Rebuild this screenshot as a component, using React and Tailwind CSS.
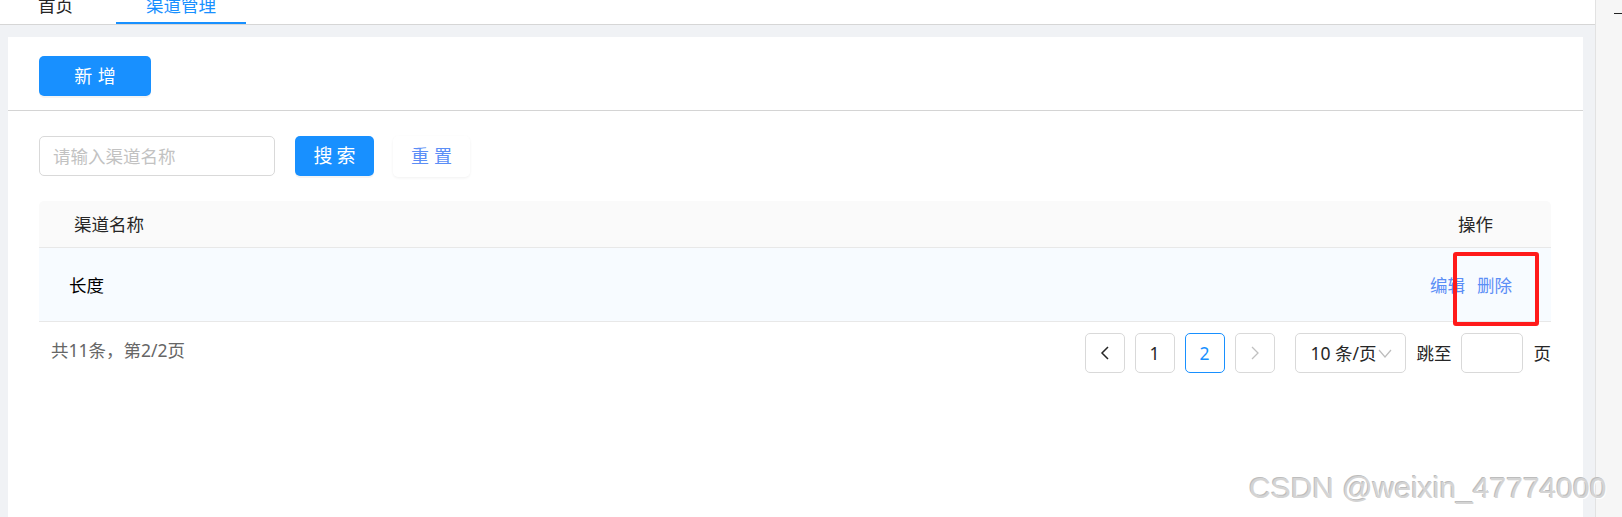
export default function App() {
  return (
    <div className="relative flex h-[517px] w-full overflow-hidden bg-[#f0f2f5] text-[17.5px] leading-[24px] text-[#262626] font-['Noto_Sans','Noto_Sans_CJK_SC',sans-serif]">
      {/* Main column */}
      <div className="flex w-[1595px] shrink-0 flex-col">
        {/* Tabs */}
        <div className="flex h-[25px] shrink-0 border-b border-[#d6d6d6] bg-white">
          <div className="ml-[38px] flex w-[78px] flex-col">
            <span className="-mt-[3px] block leading-[17.5px]">首页</span>
          </div>
          <div className="flex w-[130px] flex-col text-center text-[#1890ff]">
            <span className="-mt-[3px] block leading-[17.5px]">渠道管理</span>
            <div className="mt-auto h-[2px] bg-[#1890ff]" />
          </div>
        </div>

        {/* Content */}
        <div className="flex-1 pl-[8px] pr-[12px] pt-[12px]">
          <div className="h-full bg-white">
            {/* Toolbar */}
            <div className="h-[74px] border-b border-[#d4d4d4] pl-[31px] pt-[19px]">
              <button className="h-[40px] w-[112px] rounded-[5px] bg-[#1890ff] text-[18px] text-white shadow-[0_2px_0_rgba(0,0,0,0.045)]">
                <span className="-mr-[0.3em] tracking-[0.3em]">新增</span>
              </button>
            </div>

            <div className="pl-[31px] pr-[32px] pt-[25px]">
              {/* Search */}
              <div className="flex h-[40px] items-center">
                <input
                  className="h-[40px] w-[236px] rounded-[5px] border border-[#d9d9d9] px-[13px] outline-none placeholder:text-[#c2c2c2]"
                  placeholder="请输入渠道名称"
                />
                <button className="ml-[20px] h-[40px] w-[79px] rounded-[5px] bg-[#1890ff] text-[19px] text-white shadow-[0_2px_0_rgba(0,0,0,0.045)]">
                  <span className="-mr-[0.22em] tracking-[0.22em]">搜索</span>
                </button>
                <button className="ml-[19px] h-[41px] w-[77px] rounded-[5px] bg-white text-[18px] text-[#5b8ef6] shadow-[0_1px_3px_rgba(0,0,0,0.06)]">
                  <span className="-mr-[0.28em] tracking-[0.28em]">重置</span>
                </button>
              </div>

              {/* Table */}
              <div className="mt-[25px]">
                <div className="flex h-[47px] items-center justify-between rounded-t-[5px] border-b border-[#e8e8e8] bg-[#fafafa]">
                  <span className="pl-[35px]">渠道名称</span>
                  <span className="pr-[58px]">操作</span>
                </div>
                <div className="flex h-[74px] items-center justify-between border-b border-[#e8e8e8] bg-[#f7fbff]">
                  <span className="pl-[30px] text-black">长度</span>
                  <div className="flex gap-[12px] pr-[39px] text-[#5b8ef6]">
                    <span>编辑</span>
                    <span>删除</span>
                  </div>
                </div>
              </div>

              {/* Footer */}
              <div className="mt-[11px] flex items-center justify-between">
                <span className="-mt-[6px] pl-[12px] text-[#666]">共11条，第2/2页</span>
                <div className="flex items-center">
                  <div className="flex gap-[10px]">
                    <div className="flex h-[40px] w-[40px] items-center justify-center rounded-[5px] border border-[#d9d9d9]">
                      <svg width="10" height="14" viewBox="0 0 10 14" fill="none" stroke="#262626" strokeWidth="1.5">
                        <polyline points="8,1 2,7 8,13" />
                      </svg>
                    </div>
                    <div className="flex h-[40px] w-[40px] items-center justify-center rounded-[5px] border border-[#d9d9d9]">1</div>
                    <div className="flex h-[40px] w-[40px] items-center justify-center rounded-[5px] border border-[#1890ff] text-[#1890ff]">2</div>
                    <div className="flex h-[40px] w-[40px] items-center justify-center rounded-[5px] border border-[#d9d9d9]">
                      <svg width="10" height="14" viewBox="0 0 10 14" fill="none" stroke="#c0c0c0" strokeWidth="1.3">
                        <polyline points="2,1 8,7 2,13" />
                      </svg>
                    </div>
                  </div>
                  <div className="ml-[20px] flex h-[40px] w-[111px] items-center rounded-[5px] border border-[#d9d9d9] pl-[15px]">
                    <span>10 条/页</span>
                    <svg className="ml-[1px]" width="14" height="9" viewBox="0 0 14 9" fill="none" stroke="#bdbdbd" strokeWidth="1.2">
                      <polyline points="1,1 7,8 13,1" />
                    </svg>
                  </div>
                  <span className="ml-[11px]">跳至</span>
                  <input className="ml-[9px] h-[40px] w-[62px] rounded-[5px] border border-[#d9d9d9] outline-none" />
                  <span className="ml-[11px]">页</span>
                </div>
              </div>
            </div>
          </div>
        </div>
      </div>

      {/* Right side panel */}
      <div className="flex flex-1 justify-end border-l border-[#e2e2e2] bg-[#f6f6f6]">
        <div className="mt-[13px] h-[1px] w-[8px] bg-[#222]" />
      </div>

      {/* Red highlight box */}
      <div className="absolute left-[1453px] top-[252px] h-[74px] w-[86px] rounded-[3px] border-[4px] border-[#ff1a1a]" />

      {/* Watermark */}
      <div className="pointer-events-none absolute left-[1249px] top-[473px] text-[30px] leading-[30px] text-[#d4d4d4] font-['Liberation_Sans',sans-serif] [text-shadow:1px_1px_0_#fff,-1px_-1px_0_#bdbdbd]">
        CSDN @weixin_47774000
      </div>
    </div>
  );
}
